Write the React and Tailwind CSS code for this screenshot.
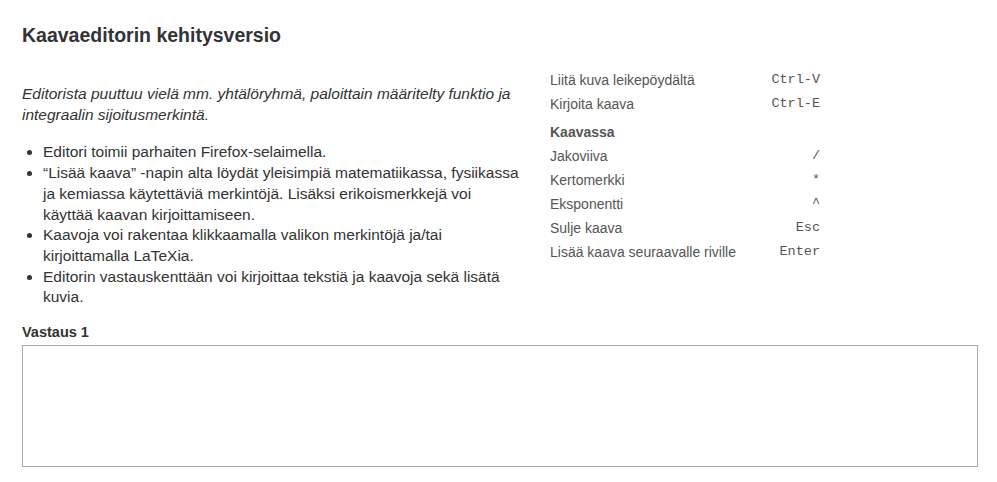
const shortcuts = [
  { label: 'Liitä kuva leikepöydältä', key: 'Ctrl-V' },
  { label: 'Kirjoita kaava', key: 'Ctrl-E' },
];

const formulaShortcuts = [
  { label: 'Jakoviiva', key: '/' },
  { label: 'Kertomerkki', key: '*' },
  { label: 'Eksponentti', key: '^' },
  { label: 'Sulje kaava', key: 'Esc' },
  { label: 'Lisää kaava seuraavalle riville', key: 'Enter' },
];

function ShortcutRow({ label, keyName }) {
  return (
    <div className="flex items-center justify-between h-[24px]">
      <span>{label}</span>
      <span className="font-['Liberation_Mono','Courier_New',monospace] text-[13.5px] text-[#555]">{keyName}</span>
    </div>
  );
}

export default function App() {
  return (
    <div className="min-h-screen bg-white text-[#333] font-['Liberation_Sans',Arial,sans-serif] text-[14px] pl-[22px] pr-[19px] pt-[24px]">
      {/* Header */}
      <h1 className="text-[19.5px] leading-[22px] font-bold">Kaavaeditorin kehitysversio</h1>

      <div className="flex mt-[22px]">
        {/* Left: info */}
        <div className="w-[500px] text-[15.5px] leading-[20.7px]">
          <p className="italic mt-[16px]">
            Editorista puuttuu vielä mm. yhtälöryhmä, paloittain määritelty funktio ja integraalin sijoitusmerkintä.
          </p>
          <ul className="list-disc pl-[21px] mt-[17px]">
            <li>Editori toimii parhaiten Firefox-selaimella.</li>
            <li>“Lisää kaava” -napin alta löydät yleisimpiä matematiikassa, fysiikassa ja kemiassa käytettäviä merkintöjä. Lisäksi erikoismerkkejä voi käyttää kaavan kirjoittamiseen.</li>
            <li>Kaavoja voi rakentaa klikkaamalla valikon merkintöjä ja/tai kirjoittamalla LaTeXia.</li>
            <li>Editorin vastauskenttään voi kirjoittaa tekstiä ja kaavoja sekä lisätä kuvia.</li>
          </ul>
        </div>

        {/* Right: shortcuts */}
        <div className="ml-[28px] w-[270px] text-[#555]">
          {shortcuts.map(s => (
            <ShortcutRow key={s.label} label={s.label} keyName={s.key} />
          ))}
          <div className="h-[24px] mt-[4px] flex items-center font-bold">Kaavassa</div>
          {formulaShortcuts.map(s => (
            <ShortcutRow key={s.label} label={s.label} keyName={s.key} />
          ))}
        </div>
      </div>

      {/* Answer */}
      <div className="mt-[16px]">
        <label className="block text-[14.5px] font-bold leading-[16px]">Vastaus 1</label>
        <div className="mt-[5px] h-[122px] border border-[#aaa] bg-white"></div>
      </div>
    </div>
  );
}
